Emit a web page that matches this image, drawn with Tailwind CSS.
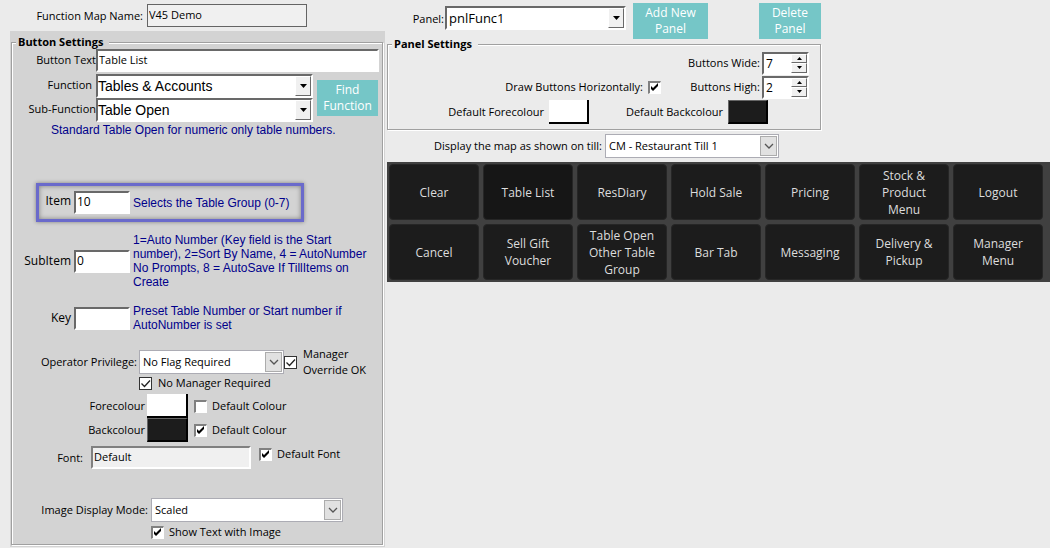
<!DOCTYPE html>
<html lang="en">
  <head>
    <meta charset="UTF-8" />
    <meta name="viewport" content="width=device-width, initial-scale=1.0" />
    <title>Function Map</title>
    <script src="https://cdn.jsdelivr.net/npm/@tailwindcss/browser@4"></script>
  </head>
  <body class="min-h-screen bg-[#ebebeb] font-['Open_Sans','Noto_Sans',sans-serif] text-[11px] leading-4 text-black">
    <!-- Shared icons -->
    <svg class="hidden">
      <symbol id="tick" viewBox="0 0 13 13"><path d="M3 5v3l2 2 5-5V2L5 7z" fill="#000" /></symbol>
      <symbol id="tickThin" viewBox="0 0 13 13"><path d="M2.5 6.5l3 3 5.500-6" fill="none" stroke="#222" stroke-width="1.300" /></symbol>
      <symbol id="arrow" viewBox="0 0 7 4"><path d="M0 0h7L3.500 4z" fill="#000" /></symbol>
      <symbol id="chevron" viewBox="0 0 10 6"><path d="M1 1l4 4 4-4" fill="none" stroke="#555" stroke-width="1.300" /></symbol>
    </svg>

    <div class="flex items-start">
      <!-- Left: button settings -->
      <div class="w-[377px] shrink-0 pl-2.5">
        <div class="flex h-[31px] items-center">
          <label for="mapName" class="w-[137px] pr-1 text-right">Function Map Name:</label>
          <input id="mapName" type="text" value="V45 Demo" readonly class="h-[23px] w-40 border border-[#646464] bg-[#f0f0f0] pb-0.5 pl-px text-black" />
        </div>

        <div class="w-[375px] bg-[#d3d3d3] px-px pt-1 pb-0.5">
          <fieldset class="w-[372px] border border-[#a0a0a0] pb-1 shadow-[1px_1px_0_#fff,inset_1px_1px_0_#fff]">
            <legend class="ml-1 bg-[#d3d3d3] pr-1.5 pl-0.5 text-[11px] leading-[14px] font-bold text-black">Button Settings</legend>

            <div class="flex h-[25px] items-start">
              <label for="buttonText" class="w-[84px] pt-[3px] text-right">Button Text</label>
              <input id="buttonText" type="text" value="Table List" class="h-[23px] w-[283px] border-2 border-t-[#696969] border-r-white border-b-white border-l-[#696969] bg-white pb-0.5 pl-px text-black" />
            </div>

            <div class="flex">
              <div>
                <div class="flex h-6 items-start">
                  <label for="func" class="w-[84px] pt-[3px] pr-1 text-right">Function</label>
                  <div class="relative w-[217px]">
                    <select id="func" class="h-6 w-full appearance-none border-2 border-t-[#696969] border-r-white border-b-white border-l-[#696969] bg-white px-0 font-['Liberation_Sans',sans-serif] text-sm text-black"><option>Tables &amp; Accounts</option></select>
                    <span class="pointer-events-none absolute top-0.5 right-0.5 flex h-5 w-4 items-center justify-center border border-t-white border-r-[#696969] border-b-[#696969] border-l-white bg-[#f0f0f0]"><svg class="h-1 w-[7px]"><use href="#arrow" /></svg></span>
                  </div>
                </div>
                <div class="flex h-6 items-start">
                  <label for="subFunc" class="w-[84px] pt-[3px] text-right">Sub-Function</label>
                  <div class="relative w-[217px]">
                    <select id="subFunc" class="h-6 w-full appearance-none border-2 border-t-[#696969] border-r-white border-b-white border-l-[#696969] bg-white px-0 font-['Liberation_Sans',sans-serif] text-sm text-black"><option>Table Open</option></select>
                    <span class="pointer-events-none absolute top-0.5 right-0.5 flex h-5 w-4 items-center justify-center border border-t-white border-r-[#696969] border-b-[#696969] border-l-white bg-[#f0f0f0]"><svg class="h-1 w-[7px]"><use href="#arrow" /></svg></span>
                  </div>
                </div>
              </div>
              <button class="mt-1.5 ml-1 h-9 w-[61px] bg-[#75c6c7] text-xs text-white">Find Function</button>
            </div>

            <p class="pl-[39px] font-['Liberation_Sans',sans-serif] text-xs text-[#00008b]">Standard Table Open for numeric only table numbers.</p>

            <!-- Item highlighted for editing -->
            <div class="mt-[45px] ml-6 flex h-[39px] w-[268px] items-center border-3 border-[#6a6acb] shadow-[0_0_4px_#0006,inset_0_0_5px_#0006]">
              <label for="item" class="w-[35px] pr-[3px] pb-[3px] text-right text-xs">Item</label>
              <input id="item" type="text" value="10" class="h-[23px] w-14 border-2 border-t-[#696969] border-r-white border-b-white border-l-[#696969] bg-white pb-0.5 pl-px text-xs text-black" />
              <span class="pl-[3px] font-['Liberation_Sans',sans-serif] text-xs text-[#00008b]">Selects the Table Group (0-7)</span>
            </div>

            <div class="mt-[11px] flex h-14 items-center">
              <label for="subItem" class="w-[62px] pr-[3px] text-right text-xs">SubItem</label>
              <input id="subItem" type="text" value="0" class="h-[23px] w-14 border-2 border-t-[#696969] border-r-white border-b-white border-l-[#696969] bg-white pb-0.5 pl-px text-xs text-black" />
              <p class="flex-1 pl-[3px] font-['Liberation_Sans',sans-serif] text-xs leading-[14px] text-[#00008b]">1=Auto Number (Key field is the Start<br />number), 2=Sort By Name, 4 = AutoNumber<br />No Prompts, 8 = AutoSave If TillItems on<br />Create</p>
            </div>

            <div class="mt-[15px] flex h-7 items-center">
              <label for="key" class="w-[62px] pr-[3px] text-right text-xs">Key</label>
              <input id="key" type="text" class="h-[23px] w-14 border-2 border-t-[#696969] border-r-white border-b-white border-l-[#696969] bg-white pl-px text-xs text-black" />
              <p class="flex-1 pl-[3px] font-['Liberation_Sans',sans-serif] text-xs leading-[14px] text-[#00008b]">Preset Table Number or Start number if<br />AutoNumber is set</p>
            </div>

            <div class="mt-4 flex h-7 items-center">
              <label for="privilege" class="w-[127px] pr-0.5 text-right">Operator Privilege:</label>
              <div class="relative w-[145px]">
                <select id="privilege" class="block h-6 w-full appearance-none border border-[#acacb4] bg-white px-[3px] text-black"><option>No Flag Required</option></select>
                <span class="pointer-events-none absolute top-0.5 right-0.5 flex h-5 w-[17px] items-center justify-center border border-[#acacac] bg-[#e1e1e1]"><svg class="h-1.5 w-2.5"><use href="#chevron" /></svg></span>
              </div>
              <label class="flex items-center">
                <span class="relative size-[13px]"><input type="checkbox" checked class="peer block size-[13px] appearance-none border border-[#333] bg-white" /><svg class="pointer-events-none absolute inset-0 hidden size-[13px] peer-checked:block"><use href="#tickThin" /></svg></span>
                <span class="pl-1.5">Manager<br />Override OK</span>
              </label>
            </div>
            <label class="ml-[127px] flex h-[14px] items-center">
              <span class="relative size-[13px]"><input type="checkbox" checked class="peer block size-[13px] appearance-none border border-[#333] bg-white" /><svg class="pointer-events-none absolute inset-0 hidden size-[13px] peer-checked:block"><use href="#tickThin" /></svg></span>
              <span class="pl-1.5">No Manager Required</span>
            </label>

            <div class="mt-1 flex h-6 items-center">
              <label for="fore" class="w-[135px] pr-0.5 text-right">Forecolour</label>
              <button id="fore" aria-label="Forecolour" class="h-6 w-[41px] border-r-2 border-b-2 border-black bg-white"></button>
              <label class="ml-1.5 flex items-center">
                <span class="relative size-[13px]"><input type="checkbox" class="peer block size-[13px] appearance-none border border-t-2 border-l-2 border-t-[#808080] border-r-white border-b-white border-l-[#808080] bg-white" /><svg class="pointer-events-none absolute inset-0 hidden size-[13px] peer-checked:block"><use href="#tick" /></svg></span>
                <span class="pl-[5px]">Default Colour</span>
              </label>
            </div>
            <div class="flex h-6 items-center">
              <label for="back" class="w-[135px] pr-0.5 text-right">Backcolour</label>
              <button id="back" aria-label="Backcolour" class="h-6 w-[41px] border border-r-2 border-b-2 border-t-[#666] border-r-black border-b-black border-l-[#666] bg-[#1c1c1c]"></button>
              <label class="ml-1.5 flex items-center">
                <span class="relative size-[13px]"><input type="checkbox" checked class="peer block size-[13px] appearance-none border border-t-2 border-l-2 border-t-[#808080] border-r-white border-b-white border-l-[#808080] bg-white" /><svg class="pointer-events-none absolute inset-0 hidden size-[13px] peer-checked:block"><use href="#tick" /></svg></span>
                <span class="pl-[5px]">Default Colour</span>
              </label>
            </div>

            <div class="mt-1 flex h-6 items-start">
              <label for="font" class="w-[79px] pt-1 pr-2 text-right">Font:</label>
              <input id="font" type="text" value="Default" readonly class="h-[23px] w-40 border-2 border-t-[#808080] border-r-white border-b-white border-l-[#808080] bg-[#f0f0f0] pb-0.5 pl-px text-black" />
              <label class="ml-2 flex items-center">
                <span class="relative size-[13px]"><input type="checkbox" checked class="peer block size-[13px] appearance-none border border-t-2 border-l-2 border-t-[#808080] border-r-white border-b-white border-l-[#808080] bg-white" /><svg class="pointer-events-none absolute inset-0 hidden size-[13px] peer-checked:block"><use href="#tick" /></svg></span>
                <span class="pl-[5px]">Default Font</span>
              </label>
            </div>

            <div class="mt-7 flex h-6 items-center">
              <label for="imageMode" class="w-[139px] pr-[3px] text-right">Image Display Mode:</label>
              <div class="relative w-48">
                <select id="imageMode" class="block h-6 w-full appearance-none border border-[#acacb4] bg-white px-[3px] text-black"><option>Scaled</option></select>
                <span class="pointer-events-none absolute top-0.5 right-0.5 flex h-5 w-[17px] items-center justify-center border border-[#acacac] bg-[#e1e1e1]"><svg class="h-1.5 w-2.5"><use href="#chevron" /></svg></span>
              </div>
            </div>
            <label class="mt-0.5 ml-[139px] flex items-center">
              <span class="relative size-[13px]"><input type="checkbox" checked class="peer block size-[13px] appearance-none border border-t-2 border-l-2 border-t-[#808080] border-r-white border-b-white border-l-[#808080] bg-white" /><svg class="pointer-events-none absolute inset-0 hidden size-[13px] peer-checked:block"><use href="#tick" /></svg></span>
              <span class="pl-[5px]">Show Text with Image</span>
            </label>
          </fieldset>
        </div>
      </div>

      <!-- Right: panel settings and till preview -->
      <div class="min-w-0 flex-1 pl-2.5">
        <div class="flex h-[37px] items-start pt-[3px]">
          <label for="panel" class="w-[58px] pt-2 pr-px text-right">Panel:</label>
          <div class="relative mt-[3px] w-[181px]">
            <select id="panel" class="h-6 w-full appearance-none border-2 border-t-[#696969] border-r-white border-b-white border-l-[#696969] bg-white px-0.5 text-[13px] text-black"><option>pnlFunc1</option></select>
            <span class="pointer-events-none absolute top-0.5 right-0.5 flex h-5 w-4 items-center justify-center border border-t-white border-r-[#696969] border-b-[#696969] border-l-white bg-[#f0f0f0]"><svg class="h-1 w-[7px]"><use href="#arrow" /></svg></span>
          </div>
          <button class="ml-[7px] h-9 w-[75px] bg-[#75c6c7] text-xs text-white">Add New Panel</button>
          <button class="ml-[51px] h-9 w-[62px] bg-[#75c6c7] text-xs text-white">Delete Panel</button>
        </div>

        <fieldset class="w-[434px] border border-[#a0a0a0] pb-[5px] shadow-[1px_1px_0_#fff,inset_1px_1px_0_#fff]">
          <legend class="ml-1 bg-[#ebebeb] pr-1.5 pl-0.5 text-[11px] leading-[14px] font-bold text-black">Panel Settings</legend>
          <div class="flex h-6 items-center justify-end pr-[11px]">
            <label for="wide" class="pr-0.5">Buttons Wide:</label>
            <div class="relative w-[47px]">
              <input id="wide" type="text" value="7" class="block h-[23px] w-full border-2 border-t-[#696969] border-r-white border-b-white border-l-[#696969] bg-white pl-0.5 text-xs text-black" />
              <div class="absolute top-0.5 right-0.5 grid h-[19px] w-4 grid-rows-2">
                <button aria-label="Wider" class="flex items-center justify-center border border-t-white border-r-[#696969] border-b-[#696969] border-l-white bg-[#f0f0f0]"><svg class="h-[3px] w-[5px] rotate-180"><use href="#arrow" /></svg></button>
                <button aria-label="Narrower" class="flex items-center justify-center border border-t-white border-r-[#696969] border-b-[#696969] border-l-white bg-[#f0f0f0]"><svg class="h-[3px] w-[5px]"><use href="#arrow" /></svg></button>
              </div>
            </div>
          </div>
          <div class="flex h-6 items-center justify-end pr-[11px]">
            <label for="horizontal" class="pr-[5px]">Draw Buttons Horizontally:</label>
            <span class="relative size-[13px]"><input id="horizontal" type="checkbox" checked class="peer block size-[13px] appearance-none border border-t-2 border-l-2 border-t-[#808080] border-r-white border-b-white border-l-[#808080] bg-white" /><svg class="pointer-events-none absolute inset-0 hidden size-[13px] peer-checked:block"><use href="#tick" /></svg></span>
            <label for="high" class="w-[101px] pr-0.5 text-right">Buttons High:</label>
            <div class="relative w-[47px]">
              <input id="high" type="text" value="2" class="block h-[23px] w-full border-2 border-t-[#696969] border-r-white border-b-white border-l-[#696969] bg-white pl-0.5 text-xs text-black" />
              <div class="absolute top-0.5 right-0.5 grid h-[19px] w-4 grid-rows-2">
                <button aria-label="Higher" class="flex items-center justify-center border border-t-white border-r-[#696969] border-b-[#696969] border-l-white bg-[#f0f0f0]"><svg class="h-[3px] w-[5px] rotate-180"><use href="#arrow" /></svg></button>
                <button aria-label="Lower" class="flex items-center justify-center border border-t-white border-r-[#696969] border-b-[#696969] border-l-white bg-[#f0f0f0]"><svg class="h-[3px] w-[5px]"><use href="#arrow" /></svg></button>
              </div>
            </div>
          </div>
          <div class="mt-px flex h-6 items-center">
            <label for="defFore" class="w-[161px] pr-[5px] text-right">Default Forecolour</label>
            <button id="defFore" aria-label="Default Forecolour" class="h-6 w-10 border-r-2 border-b-2 border-black bg-white"></button>
            <label for="defBack" class="w-[139px] pr-[5px] text-right">Default Backcolour</label>
            <button id="defBack" aria-label="Default Backcolour" class="h-6 w-10 border border-r-2 border-b-2 border-t-[#666] border-r-black border-b-black border-l-[#666] bg-[#1c1c1c]"></button>
          </div>
        </fieldset>

        <div class="mt-1 mb-1 flex h-6 items-center">
          <label for="till" class="w-[218px] pr-[3px] text-right">Display the map as shown on till:</label>
          <div class="relative w-[174px]">
            <select id="till" class="block h-6 w-full appearance-none border border-[#acacb4] bg-white px-[3px] text-black"><option>CM - Restaurant Till 1</option></select>
            <span class="pointer-events-none absolute top-0.5 right-0.5 flex h-5 w-[17px] items-center justify-center border border-[#acacac] bg-[#e1e1e1]"><svg class="h-1.5 w-2.5"><use href="#chevron" /></svg></span>
          </div>
        </div>

        <!-- Till preview -->
        <div class="grid auto-rows-[56px] grid-cols-7 gap-1 bg-[#404040] py-0.5 pr-[7px] pl-0.5 text-xs leading-[17px] text-[#ddd]">
          <button class="rounded-sm border border-[#262626] bg-[#1c1c1c]">Clear</button>
          <button class="rounded-sm border border-[#262626] bg-[#161616]">Table List</button>
          <button class="rounded-sm border border-[#262626] bg-[#1c1c1c]">ResDiary</button>
          <button class="rounded-sm border border-[#262626] bg-[#1c1c1c]">Hold Sale</button>
          <button class="rounded-sm border border-[#262626] bg-[#1c1c1c]">Pricing</button>
          <button class="rounded-sm border border-[#262626] bg-[#1c1c1c]">Stock &amp;<br />Product<br />Menu</button>
          <button class="rounded-sm border border-[#262626] bg-[#1c1c1c]">Logout</button>
          <button class="rounded-sm border border-[#262626] bg-[#1c1c1c]">Cancel</button>
          <button class="rounded-sm border border-[#262626] bg-[#1c1c1c]">Sell Gift<br />Voucher</button>
          <button class="rounded-sm border border-[#262626] bg-[#1c1c1c]">Table Open<br />Other Table<br />Group</button>
          <button class="rounded-sm border border-[#262626] bg-[#1c1c1c]">Bar Tab</button>
          <button class="rounded-sm border border-[#262626] bg-[#1c1c1c]">Messaging</button>
          <button class="rounded-sm border border-[#262626] bg-[#1c1c1c]">Delivery &amp;<br />Pickup</button>
          <button class="rounded-sm border border-[#262626] bg-[#1c1c1c]">Manager<br />Menu</button>
        </div>
      </div>
    </div>
  </body>
</html>
